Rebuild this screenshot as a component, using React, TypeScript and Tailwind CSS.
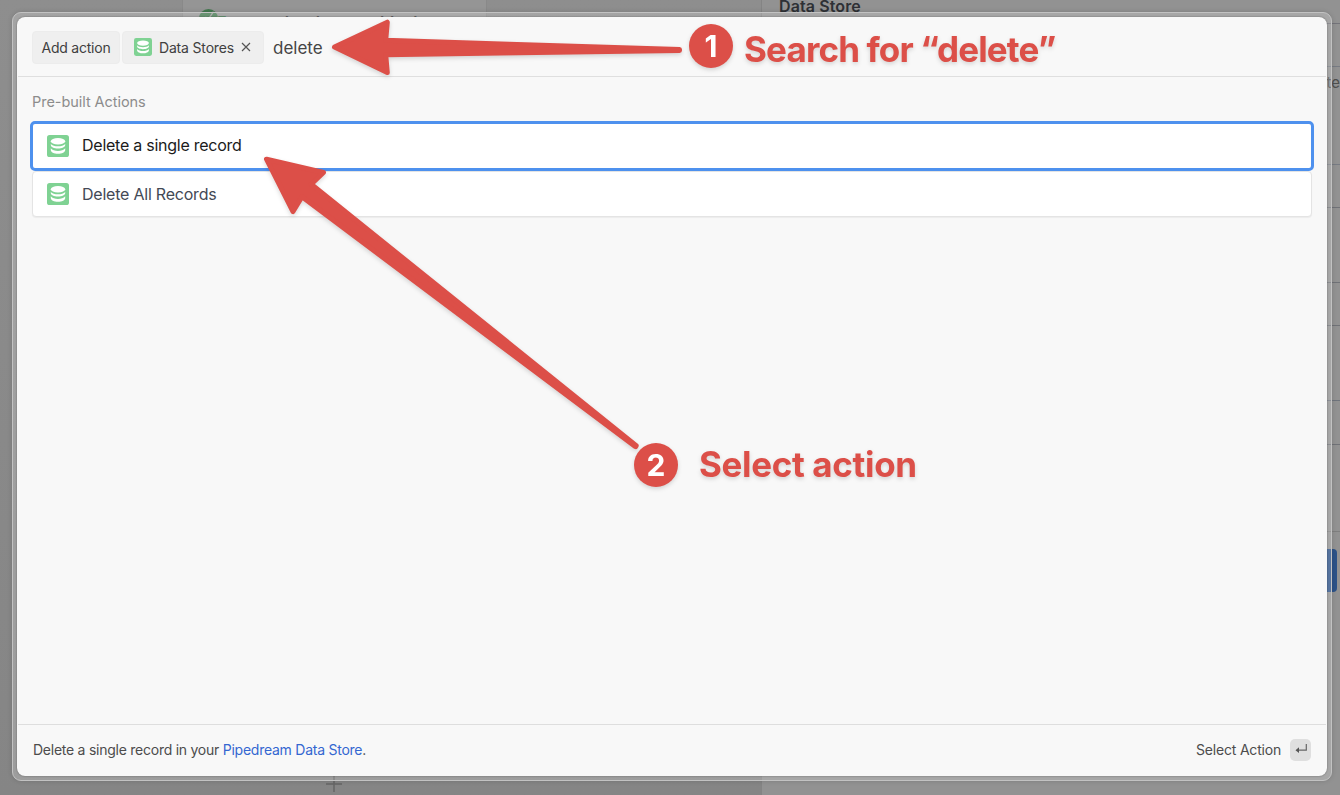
import React from "react";

function StoreIcon({ className }: { className: string }) {
  return (
    <svg viewBox="0 0 22 22" className={className} aria-hidden="true">
      <rect width="22" height="22" rx="2.6" fill="#7fd293" />
      <g fill="#fff">
        <ellipse cx="11" cy="6.2" rx="7.2" ry="3.2" />
        <path d="M3.800 8.900c1.400 1.700 4.200 2.400 7.200 2.400s5.800-.7 7.200-2.400v1.200c0 2.200-3.200 3.500-7.200 3.500s-7.200-1.300-7.200-3.500z" />
        <path d="M3.800 13.300c1.400 1.700 4.200 2.600 7.200 2.600s5.800-.9 7.200-2.600v1.600c0 2.300-3.200 3.800-7.200 3.800s-7.200-1.500-7.200-3.800z" />
      </g>
    </svg>
  );
}

function Backdrop() {
  return (
    <div className="flex h-full w-full bg-[#8b8b8b]">
      <div className="flex w-[761px] flex-col justify-between bg-linear-to-b from-[#8e8e8e] to-[#858585]">
        <div className="ml-[182px] -mt-3 h-14 w-[305px] rounded-lg border border-[#898989] bg-[#959595] pl-4 pt-[20px]">
          <div className="flex items-start gap-0.5 text-[16px] font-semibold leading-5 text-[#444]">
            <div className="flex h-[19px] w-[19px] items-start justify-center rounded-full bg-[#43794f]">
              <svg viewBox="0 0 18 18" className="h-4 w-4"><path d="M5 9l3 3 6-9" fill="none" stroke="#999" strokeWidth="1.5" /></svg>
            </div>
            <div className="flex pt-[3px] -ml-[3px] text-[#3c3c3c]">
              <span className="w-[62px] text-[#43794f]">E</span>
              <span className="w-[31px]">da</span>
              <span className="w-[70px]">da</span>
              <span>block</span>
            </div>
          </div>
        </div>
        <div className="flex h-[19px] pl-[326px]">
          <svg viewBox="0 0 16 16" className="h-4 w-4"><path d="M8 0v16M0 8h16" stroke="#666" strokeWidth="1.5" /></svg>
        </div>
      </div>
      <div className="flex flex-1 flex-col border-l border-[#848484] bg-[#929292]">
        <div className="h-6 border-b border-[#74747a] pl-[17px]">
          <div className="-mt-[5px] text-[16px] font-semibold leading-[22px] tracking-[0.1px] text-[#2e3035]">Data Store</div>
        </div>
        <div className="h-[43px] border-b border-[#777b83]" />
        <div className="h-[98px] border-b border-[#777b83] pt-[6px] text-[15px] leading-5 text-[#4f4f4f]">
          <div className="flex justify-end">te</div>
        </div>
        <div className="h-[43px] border-b border-[#707277]" />
        <div className="h-[75px] border-b border-[#707277]" />
        <div className="h-[43px] border-b border-[#707277]" />
        <div className="h-[75px] border-b border-[#6f747c]" />
        <div className="h-11 border-b border-[#707277]" />
        <div className="h-[87px] border-b border-[#7f7f7f]" />
        <div className="mr-[3px] mt-[17px] h-[43px] rounded-[4px] bg-[#2c5288]" />
      </div>
    </div>
  );
}

function Arrows() {
  return (
    <svg viewBox="0 0 1340 795" className="absolute inset-0 h-full w-full drop-shadow-[0_2px_2px_rgba(0,0,0,0.15)]" aria-hidden="true">
      <g fill="#dc4f48" stroke="#dc4f48" strokeWidth="5" strokeLinejoin="round">
        <path d="M334.500 47L387.300 22.200L385.700 40.300L679.500 49.500V50.500L385.700 54.700L387.300 72.600Z" />
        <path d="M266.500 159.200L323.500 172.500L311.200 184.200L636.200 445.700L635.600 446.700L302 196.800L293 211.500Z" />
      </g>
    </svg>
  );
}

export default function App() {
  return (
    <div className="relative h-[795px] w-full overflow-hidden font-['Inter',sans-serif]">
      <Backdrop />
      <div className="absolute left-3 top-3 flex h-[769px] w-[1320px] rounded-[9px] border border-[#c2c2c2] bg-white/20 p-1 shadow-[0_0_5px_rgba(0,0,0,0.15)]">
        <div className="flex flex-1 flex-col rounded-[8px] bg-[#f8f8f8] px-px shadow-[0_0_2px_rgba(0,0,0,0.4)]">
          <header className="flex h-[60px] items-center gap-0.5 border-b border-[#dfdfdf] pl-[14px] pt-px text-[14px] text-[#404040]">
            <div className="flex h-[33px] w-[88px] items-center justify-center rounded-[4px] border border-[#ececec] bg-[#efefef] tracking-[-0.22px]">Add action</div>
            <div className="flex h-[33px] w-[142px] items-center rounded-[4px] border border-[#ececec] bg-[#efefef] pl-[11px]">
              <StoreIcon className="h-[18px] w-[18px]" />
              <span className="w-[82px] shrink-0 pl-[7px] tracking-[-0.17px] whitespace-nowrap">Data Stores</span>
              <svg viewBox="0 0 10 10" className="ml-[7px] h-[10px] w-[10px]"><path d="M1 1l8 8M9 1l-8 8" stroke="#555" strokeWidth="1.200" /></svg>
            </div>
            <span className="pl-[7px] pt-[3px] text-[17px] text-[#454545]">delete</span>
          </header>
          <main className="flex-1 px-[14px] pt-[15px]">
            <h2 className="text-[14.500px] leading-5 tracking-[-0.05px] text-[#8c8c8c]">Pre-built Actions</h2>
            <div className="mt-[9px] -mx-[2px] flex h-[50px] items-center rounded-[5px] border-[3px] border-[#4e91ee] bg-white pl-[14px] text-[16px] text-[#1b1b1b]">
              <StoreIcon className="h-[22px] w-[22px]" />
              <span className="-mt-0.5 pl-[13px] tracking-[-0.25px]">Delete a single record</span>
            </div>
            <div className="flex h-[46px] items-center rounded-[4px] border border-[#e4e4e4] bg-white pl-[14px] text-[16px] text-[#434955] shadow-[0_1px_1px_rgba(0,0,0,0.05)]">
              <StoreIcon className="h-[22px] w-[22px]" />
              <span className="pl-[13px] tracking-[-0.22px]">Delete All Records</span>
            </div>
          </main>
          <footer className="flex h-[52px] items-center justify-between border-t border-[#dedede] pb-0.5 pl-[14px] pr-[15px] text-[14px] text-[#4c4c4c]">
            <p className="pl-px tracking-[-0.25px]">Delete a single record in your <span className="text-[#3467d1]">Pipedream Data Store</span>.</p>
            <div className="flex items-center gap-[9px]">
              <span className="tracking-[-0.2px]">Select Action</span>
              <kbd className="mt-px flex h-[22px] w-[21px] items-center justify-center rounded-[5px] bg-[#dfdfdf]">
                <svg viewBox="0 0 12 10" className="-mt-0.5 h-[10px] w-3"><path d="M11.300 0v6.200H3" fill="none" stroke="#666" strokeWidth="1.200" /><path d="M.5 6.200L4 3.300v5.800z" fill="#555" /></svg>
              </kbd>
            </div>
          </footer>
        </div>
      </div>
      <Arrows />
      <div className="absolute left-[689px] top-[24px] flex items-start text-[#dc4f48] drop-shadow-[0_2px_2px_rgba(0,0,0,0.15)]">
        <div className="flex h-[44px] w-[44px] items-center justify-center rounded-full bg-[#dc4f48] text-[30px] font-bold leading-none text-white">1</div>
        <span className="pl-[11px] pt-[3px] text-[35px] font-bold leading-[44px] tracking-[-0.85px] whitespace-nowrap">Search for “delete”</span>
      </div>
      <div className="absolute left-[634px] top-[443px] flex items-center text-[#dc4f48] drop-shadow-[0_2px_2px_rgba(0,0,0,0.15)]">
        <div className="flex h-[44px] w-[44px] items-center justify-center rounded-full bg-[#dc4f48] text-[30px] font-bold leading-none text-white">2</div>
        <span className="-mt-0.5 pl-[21px] text-[35px] font-bold leading-[44px] tracking-[-0.35px] whitespace-nowrap">Select action</span>
      </div>
    </div>
  );
}
